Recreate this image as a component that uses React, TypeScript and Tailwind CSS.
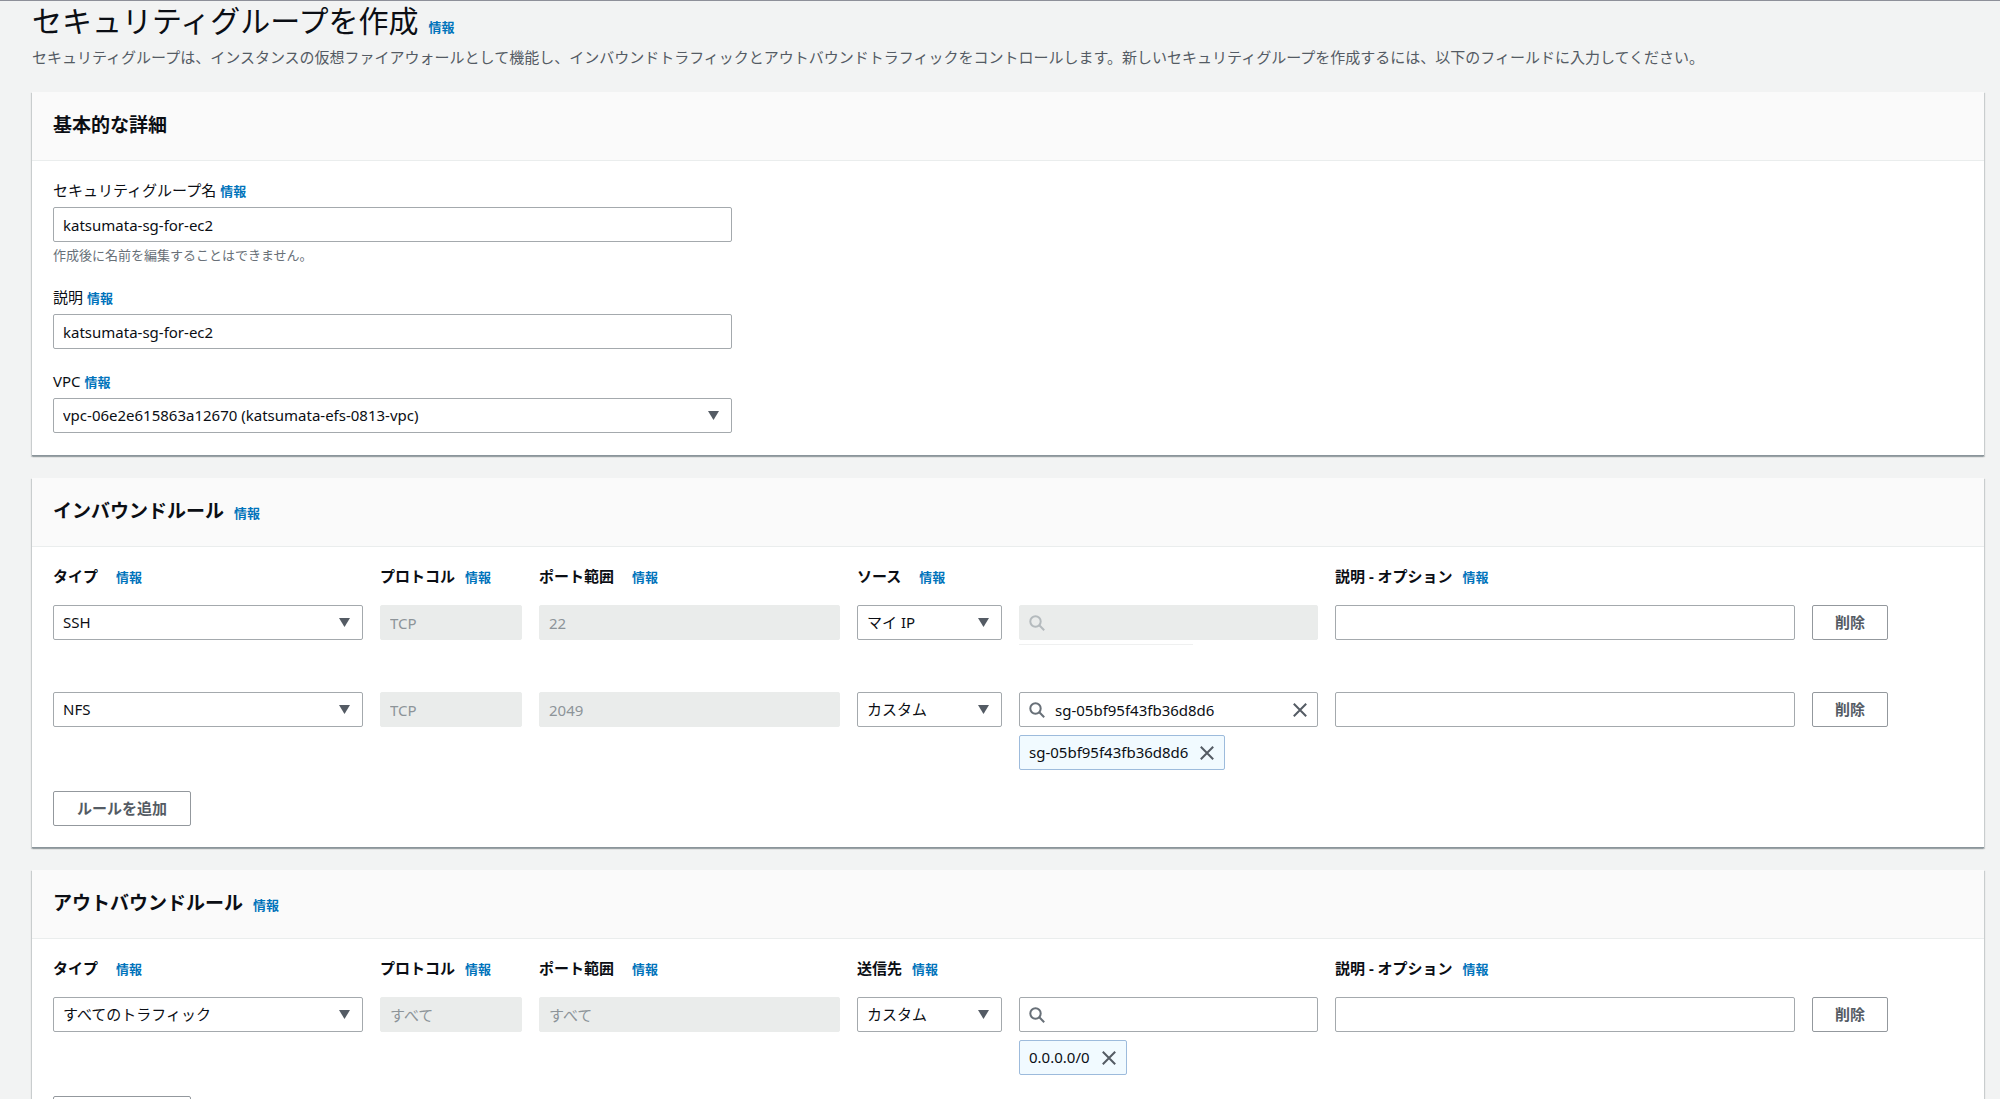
import { useId } from "react"

type Rule = {
  type: string
  protocol: string
  port: string
  source: string
  search?: string
  searchDisabled?: boolean
  chip?: string
}

const inboundRules: Rule[] = [
  { type: "SSH", protocol: "TCP", port: "22", source: "マイ IP", searchDisabled: true },
  {
    type: "NFS",
    protocol: "TCP",
    port: "2049",
    source: "カスタム",
    search: "sg-05bf95f43fb36d8d6",
    chip: "sg-05bf95f43fb36d8d6",
  },
]

const outboundRules: Rule[] = [
  { type: "すべてのトラフィック", protocol: "すべて", port: "すべて", source: "カスタム", chip: "0.0.0.0/0" },
]

const boxClass = "h-[35px] w-full rounded-xs border"
const enabledClass = "border-[#a4a9ad] bg-white text-[#0b0e14]"
const disabledClass = "border-[#eaeceb] bg-[#eaeceb] text-[#8d9499]"
const gridClass = "grid grid-cols-[310fr_142fr_301fr_145fr_299fr_460fr_151fr] gap-x-[17px]"
const buttonClass = "h-[35px] rounded-xs border border-[#93989d] bg-white font-bold text-[#545b64]"

function InfoLink() {
  return (
    <a href="#info" className="text-[13px] font-bold text-[#0073bb]">
      情報
    </a>
  )
}

function CloseIcon() {
  return (
    <svg viewBox="0 0 16 16" className="h-4 w-4" fill="none" stroke="#545b64" strokeWidth="2">
      <path d="M1.8 1.8l12.4 12.4M14.2 1.8L1.8 14.2" />
    </svg>
  )
}

function SearchIcon({ disabled }: { disabled?: boolean }) {
  return (
    <svg
      viewBox="0 0 16 16"
      className="pointer-events-none absolute top-[10px] left-[10px] h-4 w-4"
      fill="none"
      stroke={disabled ? "#b4babd" : "#687078"}
      strokeWidth="2"
    >
      <circle cx="6.5" cy="6.5" r="5.2" />
      <path d="M10.3 10.3l4.9 4.9" />
    </svg>
  )
}

function Select({ id, label, value }: { id?: string; label?: string; value: string }) {
  return (
    <div className="relative">
      <select id={id} aria-label={label} defaultValue={value} className={`${boxClass} ${enabledClass} appearance-none px-[9px]`}>
        <option>{value}</option>
      </select>
      <svg viewBox="0 0 11 9" className="pointer-events-none absolute top-[13px] right-[13px] h-[9px] w-[11px]" fill="#545b64">
        <path d="M0 0h11L5.5 9z" />
      </svg>
    </div>
  )
}

function Card({ title, info, children }: { title: string; info?: boolean; children: React.ReactNode }) {
  return (
    <section className="border-b border-[#8b959b] bg-white shadow-[0_1px_1px_0_rgba(0,28,36,0.12),-1px_1px_1px_0_rgba(0,28,36,0.15),1px_1px_1px_0_rgba(0,28,36,0.15)]">
      <header className="flex h-[69px] items-baseline gap-[10px] border-b border-[#eaeded] bg-[#fafafa] px-[21px] pt-[19px]">
        <h2 className="text-[19px] leading-7 font-bold">{title}</h2>
        {info && <InfoLink />}
      </header>
      <div className="px-[21px] pb-[21px]">{children}</div>
    </section>
  )
}

function FieldLabel({ htmlFor, text }: { htmlFor: string; text: string }) {
  return (
    <div className="mb-[6px] flex h-[22px] items-baseline gap-1 leading-[22px]">
      <label htmlFor={htmlFor}>{text}</label>
      <InfoLink />
    </div>
  )
}

function HeaderCell({ text, wide }: { text: string; wide?: boolean }) {
  return (
    <div className={`flex h-[22px] items-baseline whitespace-nowrap ${wide ? "gap-[18px]" : "gap-[10px]"}`}>
      <span className="font-bold">{text}</span>
      <InfoLink />
    </div>
  )
}

function RuleRow({ rule, sourceLabel }: { rule: Rule; sourceLabel: string }) {
  return (
    <div className={`${gridClass} min-h-[87px] items-start`}>
      <Select label="タイプ" value={rule.type} />
      <input aria-label="プロトコル" className={`${boxClass} ${disabledClass} px-[9px]`} defaultValue={rule.protocol} disabled />
      <input aria-label="ポート範囲" className={`${boxClass} ${disabledClass} px-[9px]`} defaultValue={rule.port} disabled />
      <Select label={sourceLabel} value={rule.source} />
      <div>
        <div className="relative">
          <input
            aria-label={`${sourceLabel}を検索`}
            className={`${boxClass} ${rule.searchDisabled ? disabledClass : enabledClass} px-[35px]`}
            defaultValue={rule.search}
            disabled={rule.searchDisabled}
          />
          <SearchIcon disabled={rule.searchDisabled} />
          {rule.search && (
            <button type="button" aria-label="クリア" className="absolute top-[10px] right-[10px]">
              <CloseIcon />
            </button>
          )}
        </div>
        {rule.searchDisabled && <div className="mt-1 h-px w-[174px] bg-[#eff0f0]" />}
        {rule.chip && (
          <div className="mt-2 inline-flex h-[35px] items-center gap-[11px] rounded-xs border border-[#9dbbdc] bg-[#f1faff] px-[9px]">
            {rule.chip}
            <button type="button" aria-label={`${rule.chip} を削除`}>
              <CloseIcon />
            </button>
          </div>
        )}
      </div>
      <input aria-label="説明 - オプション" className={`${boxClass} ${enabledClass} px-[9px]`} />
      <button type="button" className={`${buttonClass} w-[76px]`}>
        削除
      </button>
    </div>
  )
}

function RulesCard({ title, sourceLabel, sourceWide, rules }: { title: string; sourceLabel: string; sourceWide?: boolean; rules: Rule[] }) {
  return (
    <Card title={title} info>
      <div className={`${gridClass} py-[18px] leading-[22px]`}>
        <HeaderCell text="タイプ" wide />
        <HeaderCell text="プロトコル" />
        <HeaderCell text="ポート範囲" wide />
        <HeaderCell text={sourceLabel} wide={sourceWide} />
        <div />
        <HeaderCell text="説明 - オプション" />
      </div>
      {rules.map((rule) => (
        <RuleRow key={rule.type} rule={rule} sourceLabel={sourceLabel} />
      ))}
      <button type="button" className={`${buttonClass} mt-3 w-[138px]`}>
        ルールを追加
      </button>
    </Card>
  )
}

export default function App() {
  const id = useId()

  return (
    <main className="h-screen overflow-hidden border-t border-[#8e9099] bg-[#f2f3f3] pr-4 pl-8 font-['Noto_Sans','Noto_Sans_CJK_JP',sans-serif] text-[15px] text-[#0b0e14]">
      <div className="flex h-[42px] items-baseline gap-[10px]">
        <h1 className="text-[30px] leading-10">セキュリティグループを作成</h1>
        <InfoLink />
      </div>
      <p className="mt-[3px] leading-[22px] text-[#545b64]">
        セキュリティグループは、インスタンスの仮想ファイアウォールとして機能し、インバウンドトラフィックとアウトバウンドトラフィックをコントロールします。新しいセキュリティグループを作成するには、以下のフィールドに入力してください。
      </p>

      <form className="mt-6 flex flex-col gap-[22px]" onSubmit={(e) => e.preventDefault()}>
        <Card title="基本的な詳細">
          <div className="flex max-w-[679px] flex-col gap-[21px] pt-[18px]">
            <div>
              <FieldLabel htmlFor={`${id}-name`} text="セキュリティグループ名" />
              <input
                id={`${id}-name`}
                className={`${boxClass} ${enabledClass} block px-[9px]`}
                defaultValue="katsumata-sg-for-ec2"
              />
              <p className="mt-[3px] h-5 text-[13px] leading-5 text-[#687078]">作成後に名前を編集することはできません。</p>
            </div>
            <div>
              <FieldLabel htmlFor={`${id}-desc`} text="説明" />
              <input
                id={`${id}-desc`}
                className={`${boxClass} ${enabledClass} block px-[9px]`}
                defaultValue="katsumata-sg-for-ec2"
              />
            </div>
            <div className="mb-px">
              <FieldLabel htmlFor={`${id}-vpc`} text="VPC" />
              <Select id={`${id}-vpc`} value="vpc-06e2e615863a12670 (katsumata-efs-0813-vpc)" />
            </div>
          </div>
        </Card>

        <RulesCard title="インバウンドルール" sourceLabel="ソース" sourceWide rules={inboundRules} />
        <RulesCard title="アウトバウンドルール" sourceLabel="送信先" rules={outboundRules} />
      </form>
    </main>
  )
}
